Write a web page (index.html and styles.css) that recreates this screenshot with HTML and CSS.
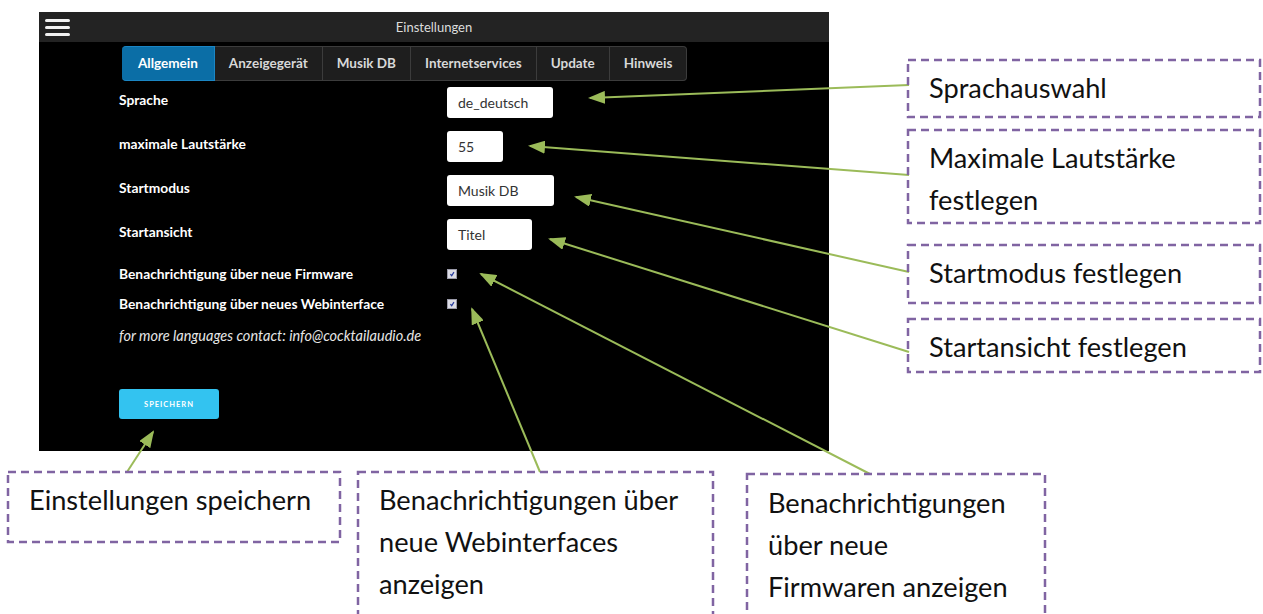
FILE: index.html
```html
<!DOCTYPE html>
<html lang="de">
<head>
  <meta charset="UTF-8" />
  <meta name="viewport" content="width=device-width, initial-scale=1.0"/>
  <title>Einstellungen – Allgemein</title>
  <link rel="stylesheet" href="styles.css">
</head>
<body>
  <div class="page">
    <div class="app">
      <div class="topbar">
        <div class="menu"><span></span><span></span><span></span></div>
        <div class="title">Einstellungen</div>
      </div>

      <ul class="tabs">
        <li class="tab active">Allgemein</li>
        <li class="tab">Anzeigegerät</li>
        <li class="tab">Musik DB</li>
        <li class="tab">Internetservices</li>
        <li class="tab">Update</li>
        <li class="tab">Hinweis</li>
      </ul>

      <div class="form">
        <div class="row">
          <label>Sprache</label>
          <div class="field lang">de_deutsch</div>
        </div>
        <div class="row">
          <label>maximale Lautstärke</label>
          <div class="field volume">55</div>
        </div>
        <div class="row">
          <label>Startmodus</label>
          <div class="field mode">Musik DB</div>
        </div>
        <div class="row">
          <label>Startansicht</label>
          <div class="field view">Titel</div>
        </div>

        <div class="check-row first">
          <label>Benachrichtigung über neue Firmware</label>
          <span class="check"><svg viewBox="0 0 10 10"><path d="M3 5.2 L4.6 7.2 L7.4 2.6" /></svg></span>
        </div>
        <div class="check-row">
          <label>Benachrichtigung über neues Webinterface</label>
          <span class="check"><svg viewBox="0 0 10 10"><path d="M3 5.2 L4.6 7.2 L7.4 2.6" /></svg></span>
        </div>

        <p class="hint">for more languages contact: info@cocktailaudio.de</p>

        <button class="save">SPEICHERN</button>
      </div>
    </div>

    <!-- annotation arrows -->
    <svg class="arrows" width="1263" height="614" viewBox="0 0 1263 614">
      <defs>
        <marker id="head" markerUnits="userSpaceOnUse" markerWidth="17" markerHeight="13" refX="15" refY="6.5" orient="auto">
          <path d="M0,0 L17,6.5 L0,13 z" fill="#9bbb59" />
        </marker>
      </defs>
      <g stroke="#9bbb59" stroke-width="2" marker-end="url(#head)">
        <line x1="909" y1="85" x2="590" y2="98" />
        <line x1="909" y1="175" x2="530" y2="146" />
        <line x1="909" y1="272" x2="576" y2="197" />
        <line x1="909" y1="352" x2="550" y2="239" />
        <line x1="870" y1="474" x2="481" y2="274" />
        <line x1="540" y1="472" x2="472" y2="309" />
        <line x1="127" y1="472" x2="153" y2="432" />
      </g>
    </svg>

    <div class="note n-lang"><svg class="frame"><rect width="100%" height="100%" /></svg>Sprachauswahl</div>
    <div class="note n-volume"><svg class="frame"><rect width="100%" height="100%" /></svg>Maximale Lautstärke<br>festlegen</div>
    <div class="note n-mode"><svg class="frame"><rect width="100%" height="100%" /></svg>Startmodus festlegen</div>
    <div class="note n-view"><svg class="frame"><rect width="100%" height="100%" /></svg>Startansicht festlegen</div>
    <div class="note n-save"><svg class="frame"><rect width="100%" height="100%" /></svg>Einstellungen speichern</div>
    <div class="note n-web"><svg class="frame"><rect width="100%" height="100%" /></svg>Benachrichtigungen über<br>neue Webinterfaces<br>anzeigen</div>
    <div class="note n-firm"><svg class="frame"><rect width="100%" height="100%" /></svg>Benachrichtigungen<br>über neue<br>Firmwaren anzeigen</div>
  </div>
</body>
</html>
```

FILE: styles.css
```css
body {
  margin: 0;
  padding: 0;
  background: #fff;
  font-family: Lato, 'Open Sans', sans-serif;
}
.page {
  position: relative;
  width: 1263px;
  height: 614px;
  overflow: hidden;
}

/* the app screenshot */
.app {
  margin: 12px 0 0 39px;
  width: 790px;
  height: 439px;
  background: #000;
  color: #fff;
}
.topbar {
  display: grid;
  grid-template-columns: 1fr auto 1fr;
  align-items: center;
  height: 30px;
  background: #232323;
}
.menu {
  display: flex;
  flex-direction: column;
  gap: 4px;
  width: 25px;
  margin-left: 6px;
}
.menu span {
  display: block;
  height: 3px;
  border-radius: 2px;
  background: #f2f2f2;
}
.title {
  font-size: 13px;
  color: #dcdcdc;
  font-weight: 400;
}

.tabs {
  display: flex;
  list-style: none;
  margin: 4px 0 0 83px;
  padding: 0;
}
.tab {
  height: 33px;
  line-height: 33px;
  padding: 0 14px;
  font-size: 13.5px;
  font-weight: 700;
  color: #d8d8d8;
  background: #1e1e1e;
  border: 1px solid #3c3c3c;
  border-left: none;
}
.tab:first-child {
  border-radius: 4px 0 0 4px;
}
.tab:last-child {
  border-radius: 0 4px 4px 0;
}
.tab.active {
  background: #0b6ea6;
  border-color: #1b86c4;
  color: #fff;
  padding: 0 16px;
}

.form {
  padding: 6px 0 0 80px;
}
.row {
  display: flex;
  align-items: flex-start;
  height: 31px;
  margin-bottom: 13px;
}
.row label,
.check-row label {
  width: 328px;
  flex: none;
  font-size: 13.8px;
  font-weight: 700;
  line-height: 16px;
}
.row label {
  padding-top: 5px;
}
.field {
  box-sizing: border-box;
  height: 31px;
  line-height: 31px;
  padding-left: 11px;
  background: #fff;
  border-radius: 3px;
  color: #333;
  font-size: 14px;
}
.field.lang { width: 106px; }
.field.volume { width: 56px; }
.field.mode { width: 107px; }
.field.view { width: 85px; }

.check-row {
  display: flex;
  align-items: center;
  height: 16px;
  margin-bottom: 14px;
}
.check-row.first {
  margin-top: 16px;
}
.check {
  width: 10px;
  height: 10px;
  box-sizing: border-box;
  background: #dcdce4;
  border: 1px solid #9a9aa8;
}
.check svg {
  display: block;
  width: 8px;
  height: 8px;
}
.check path {
  fill: none;
  stroke: #2a3fa0;
  stroke-width: 1.6;
}

.hint {
  margin: 16px 0 0;
  line-height: 16px;
  font-size: 14.5px;
  font-style: italic;
  color: #e6e6e6;
}

.save {
  margin-top: 45px;
  width: 100px;
  height: 30px;
  border: none;
  border-radius: 3px;
  background: #33c3f0;
  color: #fff;
  font-family: inherit;
  font-size: 7.5px;
  font-weight: 700;
  letter-spacing: 1px;
}

/* annotations */
.arrows {
  position: absolute;
  left: 0;
  top: 0;
}
.note {
  position: absolute;
  box-sizing: border-box;
  padding: 7px 0 0 21px;
  font-size: 27.2px;
  line-height: 42px;
  color: #111;
  white-space: nowrap;
}
.frame {
  position: absolute;
  left: 0;
  top: 0;
  width: 100%;
  height: 100%;
  overflow: visible;
}
.frame rect {
  fill: none;
  stroke: #8064a2;
  stroke-width: 2.5;
  stroke-dasharray: 8 5;
}
.n-lang { left: 908px; top: 60px; width: 352px; height: 57px; }
.n-volume { left: 908px; top: 130px; width: 352px; height: 93px; }
.n-mode { left: 908px; top: 245px; width: 352px; height: 58px; }
.n-view { left: 908px; top: 319px; width: 352px; height: 53px; }
.n-save { left: 8px; top: 472px; width: 332px; height: 70px; }
.n-web { left: 358px; top: 472px; width: 355px; height: 160px; }
.n-firm { left: 747px; top: 474px; width: 298px; height: 160px; padding-top: 8px; }
```
